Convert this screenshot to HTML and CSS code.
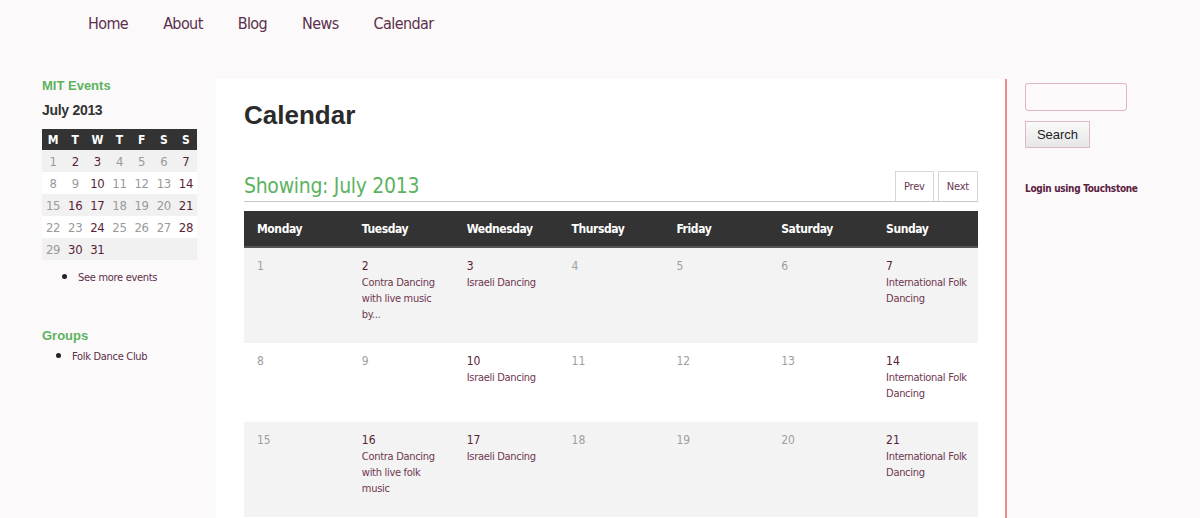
FILE: index.html
```html
<!DOCTYPE html>
<html>
<head>
<meta charset="utf-8">
<link rel="stylesheet" href="styles.css">
</head>
<body>
<nav class="topnav">
  <a href="#">Home</a>
  <a href="#">About</a>
  <a href="#">Blog</a>
  <a href="#">News</a>
  <a href="#">Calendar</a>
</nav>
<div class="layout">
  <aside class="left">
    <h3 class="block-title">MIT Events</h3>
    <h4 class="mini-month">July 2013</h4>
    <table class="mini-cal">
      <thead>
        <tr><th>M</th><th>T</th><th>W</th><th>T</th><th>F</th><th>S</th><th>S</th></tr>
      </thead>
      <tbody>
        <tr class="odd"><td>1</td><td class="ev">2</td><td class="ev">3</td><td>4</td><td>5</td><td>6</td><td class="ev">7</td></tr>
        <tr><td>8</td><td>9</td><td class="ev">10</td><td>11</td><td>12</td><td>13</td><td class="ev">14</td></tr>
        <tr class="odd"><td>15</td><td class="ev">16</td><td class="ev">17</td><td>18</td><td>19</td><td>20</td><td class="ev">21</td></tr>
        <tr><td>22</td><td>23</td><td class="ev">24</td><td>25</td><td>26</td><td>27</td><td class="ev">28</td></tr>
        <tr class="odd"><td>29</td><td class="ev">30</td><td class="ev">31</td><td></td><td></td><td></td><td></td></tr>
      </tbody>
    </table>
    <ul class="more-list"><li><a href="#">See more events</a></li></ul>
    <h3 class="block-title groups">Groups</h3>
    <ul class="group-list"><li><a href="#">Folk Dance Club</a></li></ul>
  </aside>
  <main class="main">
    <h1 class="page-title">Calendar</h1>
    <div class="cal-head">
      <h2 class="showing">Showing: July 2013</h2>
      <div class="pager">
        <a href="#" class="pbtn">Prev</a>
        <a href="#" class="pbtn">Next</a>
      </div>
    </div>
    <table class="cal">
      <thead>
        <tr><th>Monday</th><th>Tuesday</th><th>Wednesday</th><th>Thursday</th><th>Friday</th><th>Saturday</th><th>Sunday</th></tr>
      </thead>
      <tbody>
        <tr class="odd">
          <td><span class="num">1</span></td>
          <td><span class="num ev">2</span><a class="event" href="#">Contra Dancing with live music by...</a></td>
          <td><span class="num ev">3</span><a class="event" href="#">Israeli Dancing</a></td>
          <td><span class="num">4</span></td>
          <td><span class="num">5</span></td>
          <td><span class="num">6</span></td>
          <td><span class="num ev">7</span><a class="event" href="#">International Folk Dancing</a></td>
        </tr>
        <tr>
          <td><span class="num">8</span></td>
          <td><span class="num">9</span></td>
          <td><span class="num ev">10</span><a class="event" href="#">Israeli Dancing</a></td>
          <td><span class="num">11</span></td>
          <td><span class="num">12</span></td>
          <td><span class="num">13</span></td>
          <td><span class="num ev">14</span><a class="event" href="#">International Folk Dancing</a></td>
        </tr>
        <tr class="odd">
          <td><span class="num">15</span></td>
          <td><span class="num ev">16</span><a class="event" href="#">Contra Dancing with live folk music</a></td>
          <td><span class="num ev">17</span><a class="event" href="#">Israeli Dancing</a></td>
          <td><span class="num">18</span></td>
          <td><span class="num">19</span></td>
          <td><span class="num">20</span></td>
          <td><span class="num ev">21</span><a class="event" href="#">International Folk Dancing</a></td>
        </tr>
      </tbody>
    </table>
  </main>
  <aside class="right">
    <form class="search">
      <input type="text" class="search-input">
      <button type="button" class="search-btn">Search</button>
    </form>
    <a href="#" class="login">Login using Touchstone</a>
  </aside>
</div>
</body>
</html>
```

FILE: styles.css
```css
html, body {
  margin: 0;
  padding: 0;
}
body {
  background: #fcf9fb;
  font-family: "DejaVu Sans Condensed", "DejaVu Sans", Roboto, sans-serif;
  font-stretch: condensed;
  color: #333;
  height: 518px;
  overflow: hidden;
}
a {
  text-decoration: none;
}

.topnav {
  display: flex;
  padding: 12px 0 0 88px;
  height: 79px;
  box-sizing: border-box;
}
.topnav a {
  font-size: 16px;
  line-height: 24px;
  letter-spacing: -0.6px;
  color: #5b3049;
  margin-right: 35px;
}

.layout {
  display: flex;
  align-items: stretch;
}

.left {
  margin-left: 42px;
  width: 155px;
  margin-right: 19px;
}
.block-title {
  font-family: "Liberation Sans", Arial, sans-serif;
  font-stretch: normal;
  color: #5cb35f;
  font-size: 13px;
  font-weight: bold;
  margin: 0;
  line-height: 14px;
}
.mini-month {
  font-family: "Liberation Sans", Arial, sans-serif;
  font-stretch: normal;
  font-size: 14px;
  font-weight: bold;
  color: #333;
  margin: 9px 0 11px;
  line-height: 16px;
  letter-spacing: -0.3px;
}
.mini-cal {
  width: 155px;
  border-collapse: collapse;
  table-layout: fixed;
}
.mini-cal th {
  background: #333;
  color: #fff;
  font-size: 12px;
  font-weight: bold;
  height: 21px;
  padding: 0;
  text-align: center;
}
.mini-cal td {
  height: 22px;
  padding: 0;
  text-align: center;
  font-size: 13px;
  letter-spacing: -0.3px;
  color: #9a9a9a;
  background: #fff;
}
.mini-cal tr.odd td {
  background: #f1f1f1;
}
.mini-cal td.ev {
  color: #5a1f35;
}
.more-list, .group-list {
  margin: 0;
  padding: 0;
  list-style: disc;
  font-size: 11px;
  letter-spacing: -0.3px;
  color: #222;
}
.more-list li::marker, .group-list li::marker {
  font-size: 15px;
  color: #222;
}
.more-list {
  padding-left: 36px;
  margin-top: 9px;
}
.group-list {
  padding-left: 30px;
  margin-top: 5px;
}
.more-list li, .group-list li {
  line-height: 14px;
}
.more-list a, .group-list a {
  color: #5b3049;
}
.groups {
  margin-top: 44px;
}

.main {
  width: 789px;
  box-sizing: border-box;
  background: #fff;
  padding: 20px 27px 0 28px;
  min-height: 460px;
}
.page-title {
  font-family: "Liberation Sans", Arial, sans-serif;
  font-stretch: normal;
  font-size: 26px;
  font-weight: bold;
  color: #2b2b2b;
  margin: 0;
  line-height: 32px;
}
.cal-head {
  display: flex;
  align-items: flex-end;
  justify-content: space-between;
  margin-top: 40px;
  border-bottom: 1px solid #c9c9c9;
  height: 31px;
  box-sizing: border-box;
}
.showing {
  color: #5cb35f;
  font-size: 21px;
  letter-spacing: -0.3px;
  font-weight: normal;
  margin: 0 0 2px;
  line-height: 26px;
}
.pager {
  display: flex;
  gap: 4px;
  align-self: stretch;
}
.pbtn {
  display: flex;
  align-items: center;
  border: 1px solid #d6d6d6;
  border-bottom: none;
  padding: 0 8px;
  font-size: 11px;
  letter-spacing: -0.2px;
  color: #6a3550;
  background: #fff;
}
.cal {
  width: 734px;
  border-collapse: collapse;
  table-layout: fixed;
  margin-top: 9px;
}
.cal th {
  background: #333;
  color: #fff;
  font-size: 12px;
  letter-spacing: -0.4px;
  font-weight: bold;
  text-align: left;
  padding: 0 13px;
  height: 35px;
  border-bottom: 2px solid #555;
}
.cal td {
  vertical-align: top;
  padding: 10px 8px 20px 13px;
  background: #fff;
}
.cal tr.odd td {
  background: #f3f3f3;
}
.num {
  display: block;
  font-size: 12px;
  line-height: 17px;
  color: #a0a0a0;
}
.num.ev {
  color: #5a1f35;
}
.event {
  display: block;
  font-size: 11px;
  letter-spacing: -0.3px;
  line-height: 16px;
  color: #6f3750;
}

.right {
  border-left: 2px solid #f08a8a;
  padding-left: 18px;
  padding-top: 4px;
  width: 175px;
}
.search {
  display: flex;
  flex-direction: column;
  align-items: flex-start;
}
.search-input {
  width: 102px;
  height: 28px;
  box-sizing: border-box;
  border: 1px solid #e2b5c3;
  border-radius: 3px;
  background: #fdfafc;
  margin: 0;
}
.search-btn {
  margin-top: 10px;
  width: 65px;
  height: 27px;
  border: 1px solid #e0b8c4;
  background: linear-gradient(#fafafa, #e6e6e6);
  font-family: "Liberation Sans", Arial, sans-serif;
  font-stretch: normal;
  font-size: 13px;
  color: #222;
  padding: 0;
}
.login {
  display: block;
  margin-top: 35px;
  font-size: 10px;
  letter-spacing: -0.3px;
  font-weight: bold;
  color: #5a2040;
}
```
